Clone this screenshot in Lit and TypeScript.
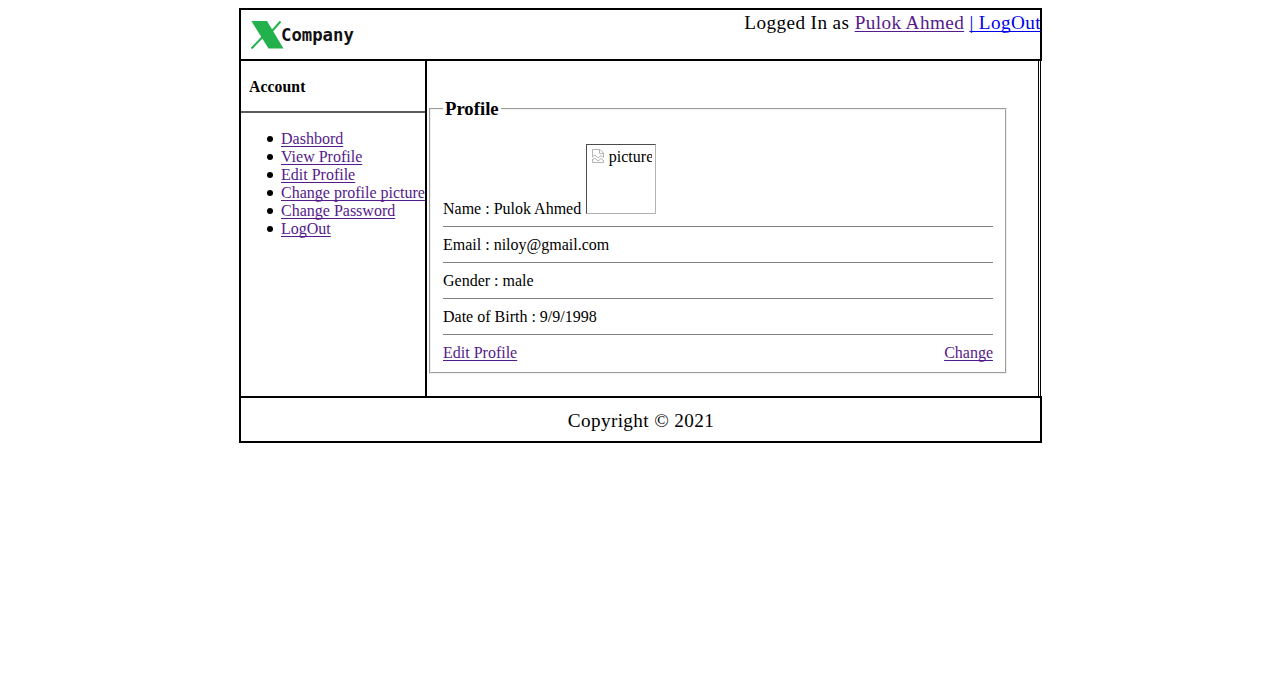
import { LitElement, html, css } from "lit";
import { customElement } from "lit/decorators.js";

@customElement("app-root")
export class AppRoot extends LitElement {
  static styles = css`
    :host { display: block; font: 16px/18px "Liberation Serif", "Times New Roman", serif; color: #000; }
    * { box-sizing: border-box; }
    a { color: #551a8b; text-decoration: underline 1px; text-underline-offset: 2px; text-decoration-skip-ink: none; cursor: pointer; }
    a.fresh { color: #0000ee; }
    .page { width: 803px; margin-left: 239px; padding-top: 8px; }
    header { display: flex; justify-content: space-between; height: 53px; border: 2px solid #000; padding-left: 9px; }
    .logo { display: block; width: 110px; height: 48px; }
    .brand { font: bold 17.3px "DejaVu Sans Mono", monospace; }
    .session { font-size: 19.2px; line-height: 23px; margin-right: -1px; padding-top: 1px; white-space: pre; letter-spacing: 0.41px; }
    main { display: flex; width: 802px; height: 335px; border-left: 2px solid #000; border-right: 3px double #000; }
    nav { width: 186px; border-right: 2px solid #000; white-space: nowrap; }
    h4 { margin: 0; padding: 17px 8px 0; height: 50px; font-size: 15.7px; line-height: 18px; letter-spacing: 0.1px; }
    .rule { height: 2px; background: #5c5c5c; }
    ul { margin: 17px 0 0; padding: 0 0 0 26px; list-style: none; }
    li { display: flex; align-items: center; gap: 8px; }
    li::before { content: ""; width: 6px; height: 6px; border-radius: 50%; background: #000; }
    .content { padding: 37px 0 0 2px; }
    fieldset { width: 578px; margin: 0; border: 2px groove #f0f0f0; padding: 6px 12px 10px; }
    legend { padding: 0 2px; font-size: 18.7px; font-weight: bold; line-height: 22px; }
    .name { display: flex; align-items: flex-end; height: 92px; padding: 18px 0 4px; gap: 4.6px; }
    .name span { margin-bottom: -4px; }
    .picture { display: flex; width: 70px; height: 70px; padding: 3px; border: 1px solid; border-color: #4c4c4c #b2b2b2 #b2b2b2 #4c4c4c; overflow: hidden; gap: 3px; }
    .picture svg { flex: none; }
    .picture div { overflow: hidden; }
    hr { margin: 8px 0; border: 0; border-top: 1px solid #808080; height: 2px; }
    .actions { display: flex; justify-content: space-between; }
    footer { height: 47px; border: 2px solid #000; text-align: center; font-size: 19.2px; line-height: 23px; letter-spacing: 0.37px; padding: 11px 0 0 1px; }
  `;

  render() {
    const links = ["Dashbord", "View Profile", "Edit Profile", "Change profile picture", "Change Password", "LogOut"];
    const rows = ["Email : niloy@gmail.com", "Gender : male", "Date of Birth : 9/9/1998"];
    return html`
      <div class="page">
        <header>
          <svg class="logo" viewBox="0 0 110 48">
            <path d="M1.300 11H17L33.500 38.500H18.500Z" fill="#22b14c" />
            <path d="M30.500 11.500L22 21M12.500 27L1.500 38.500" stroke="#22b14c" stroke-width="2" />
            <text class="brand" x="31" y="31" fill="#111">Company</text>
          </svg>
          <div class="session">Logged In as <a>Pulok Ahmed</a> <a class="fresh">| LogOut</a></div>
        </header>
        <main>
          <nav>
            <h4>Account</h4>
            <div class="rule"></div>
            <ul>${links.map((l) => html`<li><a>${l}</a></li>`)}</ul>
          </nav>
          <div class="content">
            <fieldset>
              <legend>Profile</legend>
              <div class="name">
                <span>Name : Pulok Ahmed</span>
                <div class="picture">
                  <svg width="16" height="16" viewBox="0 0 16 16" fill="none" stroke="#b5b5b5">
                    <path d="M2.5 9V1.5H10L13.500 5V9M9.500 1.500V5.500H13.500M2.500 9L5 7L8 10L11 7.500L13.500 9.500M2.500 11V14.500H13.500V12M2.500 12L5 10L8 13L11 10.500L13.500 12.500" />
                  </svg>
                  <div>picture</div>
                </div>
              </div>
              ${rows.map((r) => html`<hr /><div>${r}</div>`)}
              <hr />
              <div class="actions"><a>Edit Profile</a><a>Change</a></div>
            </fieldset>
          </div>
        </main>
        <footer>Copyright © 2021</footer>
      </div>
    `;
  }
}
